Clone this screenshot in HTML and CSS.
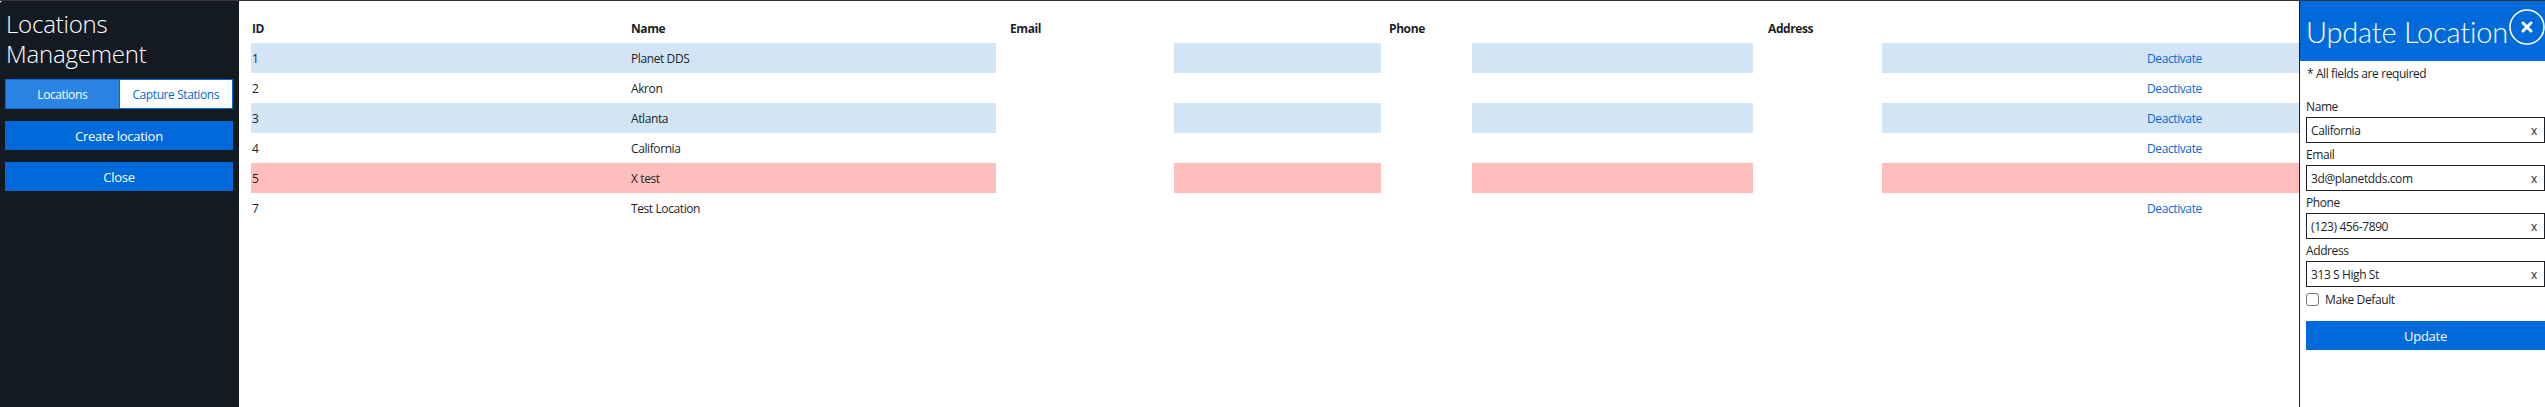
FILE: index.html
```html
<!DOCTYPE html>
<html lang="en">
<head>
    <meta charset="UTF-8">
    <meta name="viewport" content="width=device-width, initial-scale=1.0">
    <title>Locations Management</title>
    <link rel="stylesheet" href="styles.css">
</head>
<body>
    <div class="app">
        <aside class="sidebar">
            <h1>Locations Management</h1>
            <div class="tabs">
                <button class="tab active">Locations</button>
                <button class="tab">Capture Stations</button>
            </div>
            <button class="btn">Create location</button>
            <button class="btn">Close</button>
        </aside>

        <main class="content">
            <div class="table-head">
                <div>ID</div>
                <div>Name</div>
                <div>Email</div>
                <div>Phone</div>
                <div>Address</div>
                <div></div>
            </div>
            <div class="row blue">
                <div class="cell">1</div>
                <div class="cell">Planet DDS</div>
                <div class="blank"></div>
                <div class="cell"></div>
                <div class="blank"></div>
                <div class="cell"></div>
                <div class="blank"></div>
                <div class="cell"></div>
                <div class="cell"><a href="#">Deactivate</a></div>
            </div>
            <div class="row">
                <div class="cell">2</div>
                <div class="cell">Akron</div>
                <div class="blank"></div>
                <div class="cell"></div>
                <div class="blank"></div>
                <div class="cell"></div>
                <div class="blank"></div>
                <div class="cell"></div>
                <div class="cell"><a href="#">Deactivate</a></div>
            </div>
            <div class="row blue">
                <div class="cell">3</div>
                <div class="cell">Atlanta</div>
                <div class="blank"></div>
                <div class="cell"></div>
                <div class="blank"></div>
                <div class="cell"></div>
                <div class="blank"></div>
                <div class="cell"></div>
                <div class="cell"><a href="#">Deactivate</a></div>
            </div>
            <div class="row">
                <div class="cell">4</div>
                <div class="cell">California</div>
                <div class="blank"></div>
                <div class="cell"></div>
                <div class="blank"></div>
                <div class="cell"></div>
                <div class="blank"></div>
                <div class="cell"></div>
                <div class="cell"><a href="#">Deactivate</a></div>
            </div>
            <div class="row red">
                <div class="cell">5</div>
                <div class="cell">X test</div>
                <div class="blank"></div>
                <div class="cell"></div>
                <div class="blank"></div>
                <div class="cell"></div>
                <div class="blank"></div>
                <div class="cell"></div>
                <div class="cell"></div>
            </div>
            <div class="row">
                <div class="cell">7</div>
                <div class="cell">Test Location</div>
                <div class="blank"></div>
                <div class="cell"></div>
                <div class="blank"></div>
                <div class="cell"></div>
                <div class="blank"></div>
                <div class="cell"></div>
                <div class="cell"><a href="#">Deactivate</a></div>
            </div>
        </main>

        <aside class="panel">
            <header class="panel-head">
                <h2>Update Location</h2>
                <svg class="close-icon" width="36" height="36" viewBox="0 0 36 36">
                    <circle cx="18" cy="18" r="17" fill="none" stroke="#fff" stroke-width="1.6"/>
                    <path d="M14 14L22 22M22 14L14 22" fill="none" stroke="#fff" stroke-width="3" stroke-linecap="round"/>
                </svg>
            </header>
            <form class="panel-body">
                <p class="note">* All fields are required</p>
                <label class="field">Name</label>
                <div class="input"><span>California</span><span>x</span></div>
                <label class="field">Email</label>
                <div class="input"><span>3d@planetdds.com</span><span>x</span></div>
                <label class="field">Phone</label>
                <div class="input"><span>(123) 456-7890</span><span>x</span></div>
                <label class="field">Address</label>
                <div class="input"><span>313 S High St</span><span>x</span></div>
                <div class="check"><span class="box"></span>Make Default</div>
                <button type="button" class="btn">Update</button>
            </form>
        </aside>
    </div>
</body>
</html>
```

FILE: styles.css
```css
* {
    box-sizing: border-box;
}
html, body {
    margin: 0;
    height: 100%;
}
body {
    font-family: "Open Sans", "Noto Sans", sans-serif;
    font-size: 12px;
    letter-spacing: -0.4px;
    color: #1a1f29;
    background: #fff;
    overflow: hidden;
}
.app {
    display: flex;
    height: 407px;
    border-top: 1px solid #333;
}
.sidebar {
    width: 239px;
    flex: none;
    padding: 8px 6px 0 5px;
    background: #141a22;
    border-top-left-radius: 3px;
}
.sidebar h1 {
    margin: 0 0 10px 1px;
    font-size: 24px;
    font-weight: 300;
    line-height: 30px;
    letter-spacing: -0.2px;
    color: #fff;
}
.tabs {
    display: flex;
    height: 30px;
    margin-bottom: 12px;
    border: 1px solid #006adb;
}
.tab {
    flex: 1;
    border: 0;
    padding: 0;
    font: inherit;
    letter-spacing: inherit;
    background: #fff;
    color: #006adb;
}
.tab.active {
    background: #2a84e4;
    color: #fff;
    border-right: 1px solid #006adb;
}
.btn {
    display: block;
    width: 100%;
    height: 29px;
    margin-bottom: 12px;
    border: 0;
    padding: 0;
    font: inherit;
    font-size: 13px;
    letter-spacing: -0.25px;
    background: #006adb;
    color: #fff;
}
.content {
    flex: 1;
    min-width: 0;
    padding: 13px 0 0 12px;
}
.table-head {
    display: grid;
    grid-template-columns: 379px 379px 379px 379px 379px 153px;
    height: 29px;
    align-items: center;
    font-weight: 700;
}
.table-head div {
    padding-left: 1px;
}
.row {
    display: grid;
    grid-template-columns: 379px 366px 178px 207px 91px 281px 129px 264px 153px;
    height: 30px;
    align-items: stretch;
}
.cell {
    display: flex;
    align-items: center;
    padding-left: 1px;
}
.row.blue .cell {
    background: #d3e5f5;
}
.row.red .cell {
    background: #ffbebe;
}
a {
    color: #006adb;
    text-decoration: none;
}
.panel {
    width: 246px;
    flex: none;
    border-left: 1px solid #1a1f29;
}
.panel-head {
    display: flex;
    align-items: center;
    height: 60px;
    padding-left: 6px;
    background: #006adb;
    color: #fff;
}
.panel-head h2 {
    flex: 1;
    min-width: 0;
    margin: 0;
    font-family: Lato, "Open Sans", sans-serif;
    font-size: 29px;
    font-weight: 300;
    letter-spacing: -0.2px;
    white-space: nowrap;
}
.close-icon {
    flex: none;
    align-self: flex-start;
    margin-top: 8px;
}
.panel-body {
    padding: 0 0 0 6px;
}
.note {
    margin: 0 0 13px 1px;
    padding-top: 4px;
    line-height: 17px;
}
.field {
    display: block;
    height: 22px;
    line-height: 23px;
}
.input {
    display: flex;
    justify-content: space-between;
    align-items: center;
    height: 26px;
    padding: 0 7px 0 4px;
    border: 1px solid #1a1f29;
}
.check {
    display: flex;
    align-items: center;
    height: 24px;
    margin-bottom: 10px;
}
.box {
    width: 13px;
    height: 13px;
    margin-right: 6px;
    border: 1px solid #767676;
    border-radius: 3px;
}
```
